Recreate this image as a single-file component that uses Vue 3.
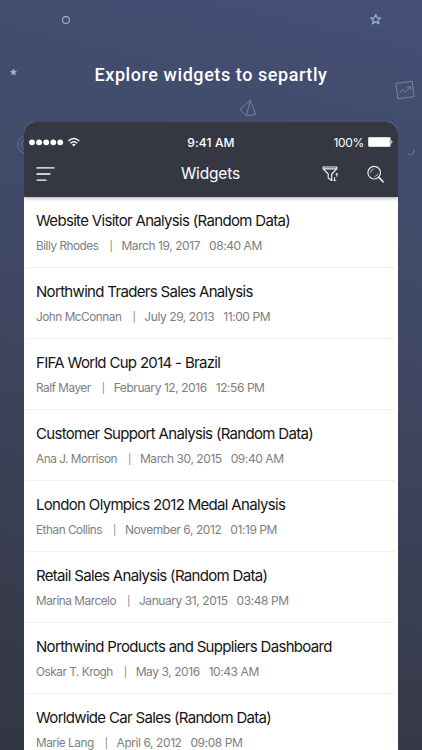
<script setup>
const widgets = [
  { title: 'Website Visitor Analysis (Random Data)', author: 'Billy Rhodes', date: 'March 19, 2017', time: '08:40 AM' },
  { title: 'Northwind Traders Sales Analysis', author: 'John McConnan', date: 'July 29, 2013', time: '11:00 PM' },
  { title: 'FIFA World Cup 2014 - Brazil', author: 'Ralf Mayer', date: 'February 12, 2016', time: '12:56 PM' },
  { title: 'Customer Support Analysis (Random Data)', author: 'Ana J. Morrison', date: 'March 30, 2015', time: '09:40 AM' },
  { title: 'London Olympics 2012 Medal Analysis', author: 'Ethan Collins', date: 'November 6, 2012', time: '01:19 PM' },
  { title: 'Retail Sales Analysis (Random Data)', author: 'Marina Marcelo', date: 'January 31, 2015', time: '03:48 PM' },
  { title: 'Northwind Products and Suppliers Dashboard', author: 'Oskar T. Krogh', date: 'May 3, 2016', time: '10:43 AM' },
  { title: 'Worldwide Car Sales (Random Data)', author: 'Marie Lang', date: 'April 6, 2012', time: '09:08 PM' },
]
</script>

<template>
  <main class="screen">
    <svg class="decor" width="422" height="200" viewBox="0 0 422 200" fill="none" stroke="#8291bd" stroke-linejoin="round">
      <circle cx="66" cy="20" r="3.4" stroke="#a0add4" stroke-width="1.1" />
      <path d="M13.5 68.3l1 2.5 2.6.2-2 1.7.6 2.6-2.2-1.4-2.2 1.4.6-2.6-2-1.7 2.6-.2z" fill="#a5b2d8" stroke="none" />
      <path d="M375.7 14.4l1.4 3.4 3.6.2-2.8 2.2 1 3.6-3.2-2.1-3.2 2.1 1-3.6-2.8-2.2 3.6-.2z" stroke="#97a5cf" stroke-width="1.4" />
      <g stroke="#7583ab" stroke-width="1">
        <path d="M250.3 100.3L240 109.5l6.3 6.3 9.4-1.5zM250.3 100.3l-4 15.5" />
        <path d="M396 83.3l16.2-2 1.8 15.4-16.2 2zM399.2 93.8l3.3-4 3.3 2 4.4-4.8M407 87l3.4-.4.4 3.4" />
      </g>
      <circle cx="27" cy="144.5" r="9.3" stroke="#65749b" />
      <circle cx="27" cy="144.5" r="5.7" stroke="#65749b" />
      <path d="M413.6 149.6c1.2 3.6-2.3 6.8-5.6 4.2" stroke="#7583ab" stroke-width="1" />
    </svg>
    <h1 class="headline">Explore widgets to separtly</h1>
    <section class="phone">
      <header class="bar">
        <div class="status">
          <svg class="signal" width="52" height="12" viewBox="0 0 52 12" fill="#fff">
            <circle cx="3" cy="6.3" r="2.9" /><circle cx="10.1" cy="6.3" r="2.9" /><circle cx="17.2" cy="6.3" r="2.9" /><circle cx="24.3" cy="6.3" r="2.9" /><circle cx="31.2" cy="6.3" r="2.9" />
            <g fill="none" stroke="#fff" stroke-width="1.4"><path d="M39.3 5.1q5.5-5 11 0M41.4 7.2q3.4-3 6.8 0" /></g>
            <path d="M42.9 8.6q1.9-1.5 3.8 0l-1.9 1.9z" />
          </svg>
          <span class="clock">9:41 AM</span>
          <span class="power">100%
            <svg width="25" height="10" viewBox="0 0 25 10" fill="#fff"><rect width="22.7" height="10" rx="1.4" fill="#d4d6da" /><rect x="1" y="1" width="20.7" height="8" rx=".7" /><path d="M23.3 3.1q2.2 1.9 0 3.8z" /></svg>
          </span>
        </div>
        <nav class="nav">
          <svg width="20" height="16" viewBox="0 0 20 16" fill="none" stroke="#fff" stroke-width="1.4" stroke-linecap="round"><path d="M1 1.9h17M1 8h13M1 14.1h9" /></svg>
          <span class="heading">Widgets</span>
          <div class="tools">
            <svg width="18" height="18" viewBox="0 0 18 18" fill="none" stroke="#eef0f4" stroke-width="1.2" stroke-linejoin="round">
              <path d="M1.2 2h13.6v1.8L9.7 9v6.5l-3.5-2.4V9L1.2 3.8zM1.4 3.8h13.2" />
              <path d="M14.8 8.4v3.2M13.6 9.5l1.2-1.3 1.2 1.3M12.6 12.2v3.8M11.4 14.8l1.2 1.3 1.2-1.3" stroke-width="1" />
            </svg>
            <svg width="18" height="18" viewBox="0 0 18 18" fill="none" stroke="#eef0f4" stroke-linecap="round">
              <circle cx="7.2" cy="7.7" r="6.3" stroke-width="1.2" /><path d="M3.5 7.5q.2-3.2 3.3-3.6M7.9 11.5q2.5-.3 3-2.7" stroke-width=".7" /><path d="M11.9 12.4l4.2 4.4" stroke-width="1.6" />
            </svg>
          </div>
        </nav>
      </header>
      <ul class="list">
        <li v-for="item in widgets" :key="item.title" class="row">
          <h2 class="title">{{ item.title }}</h2>
          <p class="meta"><span class="author">{{ item.author }}</span><i class="pipe">|</i><span>{{ item.date }}</span><span class="time">{{ item.time }}</span></p>
        </li>
      </ul>
    </section>
  </main>
</template>

<style>
body { margin: 0; }
</style>

<style scoped>
.screen {
  position: relative;
  box-sizing: border-box;
  width: 422px;
  height: 750px;
  overflow: hidden;
  padding: 61px 24px 0;
  background: linear-gradient(193deg, #445078 0%, #424c6c 18%, #404967 37%, #363a49 86%, #333744 100%);
  font-family: Inter, "Liberation Sans", sans-serif;
}
.decor { position: absolute; left: 0; top: 0; }
.headline {
  position: relative;
  margin: 0 0 33px;
  height: 28px;
  font: 500 18px/28px Roboto, sans-serif;
  letter-spacing: .57px;
  text-align: center;
  color: #fff;
}
.phone {
  position: relative;
  height: 640px;
  border-radius: 11px 11px 0 0;
  overflow: hidden;
  background: #fff;
}
.bar {
  position: relative;
  height: 75px;
  background: #353843;
  box-shadow: 0 1px 4px rgba(0, 0, 0, .35);
  color: #fff;
}
.status {
  display: grid;
  grid-template-columns: 1fr auto 1fr;
  align-items: center;
  height: 40px;
  padding: 0 5px;
  font-size: 12px;
}
.clock { font-weight: 500; letter-spacing: .15px; }
.power { display: flex; align-items: center; justify-content: flex-end; gap: 4px; letter-spacing: -.3px; }
.nav {
  display: grid;
  grid-template-columns: 1fr auto 1fr;
  align-items: center;
  height: 23px;
  padding: 0 13px 0 12px;
}
.heading { font-size: 15.5px; letter-spacing: -.15px; }
.tools { display: flex; justify-content: flex-end; gap: 27px; }
.list { list-style: none; margin: 0; padding: 0; }
.row {
  box-sizing: border-box;
  height: 70.95px;
  margin: 0 3px 0 2px;
  padding: 13.2px 0 0 10px;
  border-bottom: 1px solid #f0f0f1;
}
.title {
  margin: 0;
  font-size: 15px;
  font-weight: 400;
  line-height: 22px;
  letter-spacing: -.68px;
  color: #141414;
  white-space: nowrap;
}
.meta {
  display: flex;
  margin: 4px 0 0;
  font-size: 12px;
  line-height: 20px;
  letter-spacing: -.43px;
  color: #7e7e7e;
  white-space: nowrap;
}
.author { font-size: 11.8px; letter-spacing: -.48px; }
.pipe { font-style: normal; font-size: 10px; margin: 0 9px 0 11px; }
.time { margin-left: 9px; }
</style>
